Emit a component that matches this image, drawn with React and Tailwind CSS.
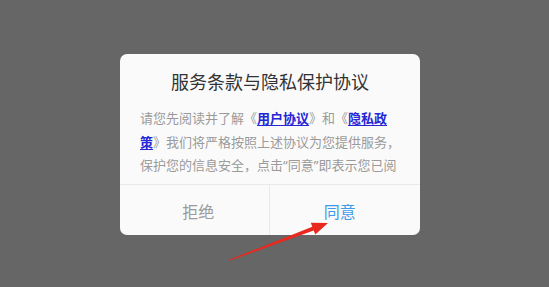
import React from 'react';

const font = { fontFamily: '"Noto Sans CJK SC", "Noto Sans", sans-serif' };
const latin = { fontFamily: '"Noto Sans", sans-serif' };

export default function App() {
    return (
        <div
            className="relative h-[287px] w-[549px] overflow-hidden bg-[#666666] pl-[120px] pt-[54px]"
            style={font}
        >
            <div className="flex h-[181px] w-[300px] flex-col overflow-hidden rounded-[7px] bg-[#fafafa]">
                <h2 className="pt-[15px] text-center text-[18px] leading-[24px] text-[#333333]">
                    服务条款与隐私保护协议
                </h2>

                <div className="mt-[13px] h-[78px] pl-[20px] pr-[16px]">
                    <p className="h-[70px] overflow-hidden text-[13px] leading-[23.5px] text-[#9a9a9a]">
                        请您先阅读并了解《
                        <span className="font-bold text-[#2626d6] underline underline-offset-2">用户协议</span>
                        》和《
                        <span className="font-bold text-[#2626d6] underline underline-offset-2">隐私政策</span>
                        》我们将严格按照上述协议为您提供服务，保护您的信息安全，点击
                        <span style={latin}>“</span>同意<span style={latin}>”</span>
                        即表示您已阅读并同意上述协议的全部内容。
                    </p>
                </div>

                <div className="flex flex-1 border-t border-[#e9e9e9]">
                    <button className="flex flex-1 items-center justify-center pl-[8px] pt-[2px] text-[16px] text-[#9a9a9a]">
                        拒绝
                    </button>
                    <button className="flex flex-1 items-center justify-center border-l border-[#e9e9e9] pr-[10px] pt-[2px] text-[16px] text-[#3d9be9]">
                        同意
                    </button>
                </div>
            </div>

            {/* red arrow annotation */}
            <svg className="pointer-events-none absolute inset-0" width="549" height="287" viewBox="0 0 549 287">
                <polygon
                    points="230,260.6 313.7,230.5 315.3,234.4 328,223 310.8,222.8 312.3,226.7 229.6,259.6"
                    fill="#e8291e"
                />
            </svg>
        </div>
    );
}
